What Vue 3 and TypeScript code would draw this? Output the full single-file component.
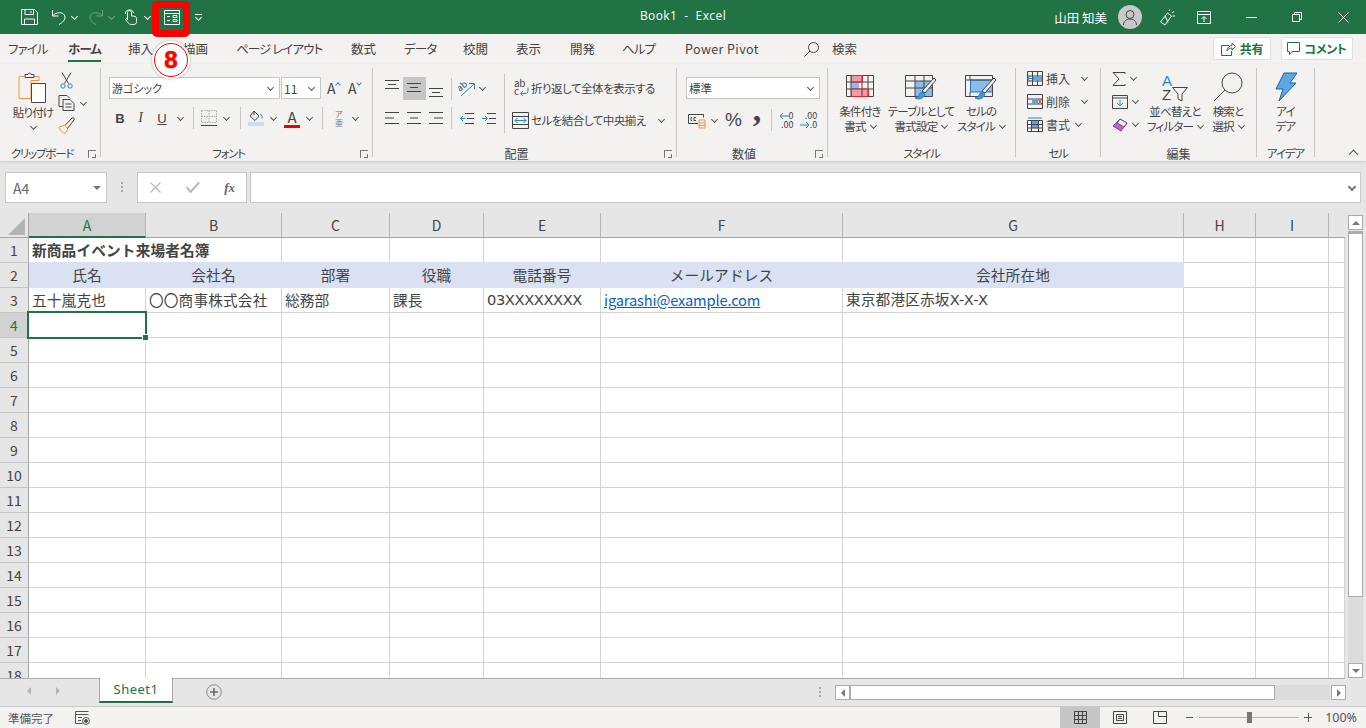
<template>
  <div class="app">
    <!-- title bar -->
    <header class="titlebar">
      <div class="qat">
        <svg class="q-save" width="17" height="16" viewBox="0 0 17 16"><path d="M.5.5h13l3 3v12H.5zM4 .5v5h8.500v-5M10 2v2M3.500 15.500V10h10v5.500" /></svg>
        <svg class="q-undo" width="15" height="16" viewBox="0 0 15 16"><path d="M1.500 1v6h6M1.500 7C4 3 13.500 2 14 8c.2 3-2.500 5.500-6 7.500" /></svg>
        <i class="chev w q-c1"></i>
        <svg class="q-redo" width="15" height="16" viewBox="0 0 15 16"><path d="M13.500 1v6h-6M13.500 7C11 3 1.500 2 1 8c-.2 3 2.500 5.500 6 7.500" /></svg>
        <i class="chev w dim q-c2"></i>
        <svg class="q-touch" width="13" height="16" viewBox="0 0 13 16"><path d="M3.500 10V3.500c0-2.500 4-2.500 4 0V7c3 0 5 .5 5 2.500v3c0 2-1 3-3 3h-2c-2 0-3-1-6-5 1-1.500 2-1 2 .5M1.500 5C.5.500 8.500-1 9.500 4" /></svg>
        <i class="chev w q-c3"></i>
        <svg class="q-form" width="16" height="15" viewBox="0 0 16 15"><path d="M.5.5h15v14H.5zM.5 3.500h15M3 6.500h3M3 10.500h3M9 5.500h4v2H9zM9 9.500h4v2H9z" /></svg>
        <span class="q-more"><b></b><i class="chev w"></i></span>
      </div>
      <div class="doc-title">Book1&nbsp; -&nbsp; Excel</div>
      <div class="winbar">
        <span class="user">山田 知美</span>
        <span class="avatar">
          <svg width="14" height="15" viewBox="0 0 14 15"><circle cx="7" cy="4.500" r="4" /><path d="M.5 15c0-8 13-8 13 0" /></svg>
        </span>
        <svg class="w-wand" width="16" height="17" viewBox="0 0 16 17"><path d="M.5 13l7-9 4 3-6.500 9zM5 6.500l3 7M9 2l1-1.500M12 4l2-1.500M12.500 7H15" /></svg>
        <svg class="w-disp" width="14" height="13" viewBox="0 0 14 13"><path d="M.5.500h13v12H.5zM.5 3.500h13M7 11V6M4.500 8L7 5.500 9.500 8" /></svg>
        <svg class="w-min" width="11" height="1" viewBox="0 0 11 1"><path d="M0 .5h11" /></svg>
        <svg class="w-max" width="10" height="10" viewBox="0 0 10 10"><path d="M.5 2.500h7v7h-7zM2.500 2.500v-2h7v7h-2" /></svg>
        <svg class="w-close" width="11" height="11" viewBox="0 0 11 11"><path d="M.5.5l10 10M10.500.5l-10 10" /></svg>
      </div>
    </header>

    <!-- ribbon tabs -->
    <nav class="tabs">
      <div class="tab-list">
        <div v-for="tab in tabs" :key="tab" class="tab" :class="tabClass(tab)">
          <span :class="{ active: tab === 'ホーム' }">{{ tab }}</span>
        </div>
        <div class="tab search-ic">
          <svg width="15" height="15" viewBox="0 0 15 15"><circle cx="9.500" cy="5.500" r="5" /><path d="M6 9l-5.500 5.500" /></svg>
        </div>
        <div class="tab"><span>検索</span></div>
      </div>
      <div class="share">
        <button class="pill">
          <svg width="15" height="14" viewBox="0 0 15 14"><path d="M8 3.500H.5v10h10V9M6 9c0-3.500 2.500-5.500 5-5.500V1l3.500 3.500L11 8V6C9 6 7 7 6 9z" /></svg>
          <b>共有</b>
        </button>
        <button class="pill wide">
          <svg width="13" height="13" viewBox="0 0 13 13"><path d="M.5.5h12v9H5l-2.500 3v-3h-2z" /></svg>
          <b>コメント</b>
        </button>
      </div>
    </nav>

    <!-- ribbon -->
    <section class="ribbon">
      <div class="group g-clip">
        <div class="body clip-body">
          <div class="big paste">
            <svg class="big-ic" width="28" height="31" viewBox="0 0 28 31">
              <path class="or" d="M6 4H1v22h12V8h8V4h-5" />
              <path class="dk" d="M7 5V2h3c0-2 3-2 3 0h3v3z" />
              <path class="dk wh" d="M13.500 11h14v19h-14z" />
            </svg>
            <span>貼り付け</span>
            <i class="chev below"></i>
          </div>
          <div class="small-col">
            <svg class="scissors" width="13" height="17" viewBox="0 0 13 17">
              <path class="dk" d="M2 .5l6.500 11M11 .5L4.500 11.500" />
              <circle class="bl" cx="3" cy="14" r="2.200" /><circle class="bl" cx="10" cy="14" r="2.200" />
            </svg>
            <div class="with-chev">
              <svg width="18" height="16" viewBox="0 0 18 16">
                <path class="dk" d="M1 .5h8l3 3M5 11.500H1V.5M5 4.500h7l4 4v7H5zM7.500 9h6M7.500 12h6" />
              </svg>
              <i class="chev"></i>
            </div>
            <svg width="17" height="17" viewBox="0 0 17 17">
              <path class="or" d="M1 10l6-2 3 4-3 4.500C5 16 2 14 1 10z" />
              <path class="dk" d="M7.500 8L14 1c1.500-1 3 .5 2 2l-6.500 8.500" />
            </svg>
          </div>
        </div>
        <div class="label kana"><span>クリップボード</span><i class="launcher"></i></div>
      </div>

      <div class="group g-font">
        <div class="body font-body">
          <div class="font-row">
            <div class="select font-name">游ゴシック<i class="chev"></i></div>
            <div class="select font-size">11<i class="chev"></i></div>
            <span class="grow">A<i class="chev up bluec"></i></span>
            <span class="grow">A<i class="chev bluec"></i></span>
          </div>
          <div class="font-tools">
            <b class="t-b">B</b>
            <em class="t-i">I</em>
            <u class="t-u">U</u>
            <i class="chev"></i>
            <i class="vsep"></i>
            <svg width="16" height="16" viewBox="0 0 16 16">
              <path class="grey dash" d="M.5.5h15v12H.5zM8 .5v12M.5 6.500h15" /><path class="dk" d="M0 15.500h16" />
            </svg>
            <i class="chev"></i>
            <i class="vsep"></i>
            <svg width="16" height="16" viewBox="0 0 16 16">
              <path class="dk" d="M6 1l5 5-4 4.500-5-4.500zM6 1v4" /><path class="bl" d="M12 4c2 1 2.500 3 2 4.500" />
              <rect x="0" y="12" width="16" height="4" fill="#cdd9ee" stroke="none" />
            </svg>
            <i class="chev"></i>
            <span class="t-a">A<b></b></span>
            <i class="chev"></i>
            <i class="vsep"></i>
            <span class="t-ph"><small>ア</small><small>亜</small></span>
            <i class="chev"></i>
          </div>
        </div>
        <div class="label kana"><span>フォント</span><i class="launcher"></i></div>
      </div>

      <div class="group g-align">
        <div class="body align-body">
          <div class="align-left">
            <div class="align-row first">
              <svg width="14" height="22" viewBox="0 0 14 22"><path class="dk" d="M0 2.500h14M3 6.500h8M0 10.500h14" /></svg>
              <span class="on"><svg width="14" height="22" viewBox="0 0 14 22"><path class="dk" d="M0 6.500h14M3 10.500h8M0 14.500h14" /></svg></span>
              <svg width="14" height="22" viewBox="0 0 14 22"><path class="dk" d="M0 10.500h14M3 14.500h8M0 18.500h14" /></svg>
              <i class="vsep"></i>
              <svg width="18" height="18" viewBox="0 0 18 18">
                <text x="0" y="9" class="tiny" transform="rotate(-40 5 8)">ab</text>
                <path class="bl" d="M3 16L16 4M11 3.500h5.500V9" />
              </svg>
              <i class="chev"></i>
            </div>
            <div class="align-row second">
              <svg width="14" height="14" viewBox="0 0 14 14"><path class="dk" d="M0 1.500h14M0 7h9M0 12.500h14" /></svg>
              <svg width="14" height="14" viewBox="0 0 14 14"><path class="dk" d="M0 1.500h14M3 7h8M0 12.500h14" /></svg>
              <svg width="14" height="14" viewBox="0 0 14 14"><path class="dk" d="M0 1.500h14M5 7h9M0 12.500h14" /></svg>
              <i class="vsep"></i>
              <svg width="14" height="13" viewBox="0 0 14 13"><path class="dk" d="M5 1.500h9M7 6.500h7M5 11.500h9" /><path class="bl" d="M5.500 6.500H.5M3 4L.5 6.500 3 9" /></svg>
              <svg width="14" height="13" viewBox="0 0 14 13"><path class="dk" d="M5 1.500h9M7 6.500h7M5 11.500h9" /><path class="bl" d="M0 6.500h5M3 4l2.500 2.500L3 9" /></svg>
            </div>
          </div>
          <i class="vsep long"></i>
          <div class="align-right">
            <div class="wide-row">
              <span class="wrap-ic"><small>ab</small><small>c</small>
                <svg width="9" height="10" viewBox="0 0 9 10"><path class="bl" d="M8 .5v3c0 2-1 3-3 3H1M3 4L.5 6.500 3 9" /></svg>
              </span>
              <span>折り返して全体を表示する</span>
            </div>
            <div class="wide-row">
              <svg width="17" height="17" viewBox="0 0 17 17">
                <path class="dk" d="M.5.500h16v16H.5zM.5 4.500h16M.5 12.500h16" /><path class="bl" d="M3 8.500h11M5.500 6L3 8.500 5.500 11M11.500 6L14 8.500 11.500 11" />
              </svg>
              <span>セルを結合して中央揃え</span>
              <i class="chev merge-chev"></i>
            </div>
          </div>
        </div>
        <div class="label"><span>配置</span><i class="launcher"></i></div>
      </div>

      <div class="group g-num">
        <div class="body num-body">
          <div class="select num-format">標準<i class="chev"></i></div>
          <div class="num-tools">
            <svg width="18" height="17" viewBox="0 0 18 17">
              <path class="dk" d="M10 11.500H.5v-9h15v3M4 5.500h-1v3h1M8 5.500H6v3h2" />
              <path class="or" d="M11 8h6v8h-6zM11 11h6M11 13.500h6" />
            </svg>
            <i class="chev"></i>
            <span class="t-pct">%</span>
            <span class="t-comma">,</span>
            <i class="vsep"></i>
            <span class="dec">
              <span class="dec-row"><svg width="10" height="8" viewBox="0 0 10 8"><path class="bl" d="M10 4H1M4 1L1 4l3 3" /></svg><small>0</small></span>
              <small>.00</small>
            </span>
            <span class="dec">
              <small>.00</small>
              <span class="dec-row"><svg width="10" height="8" viewBox="0 0 10 8"><path class="bl" d="M0 4h9M6 1l3 3-3 3" /></svg><small>.0</small></span>
            </span>
          </div>
        </div>
        <div class="label"><span>数値</span><i class="launcher"></i></div>
      </div>

      <div class="group g-style">
        <div class="body style-body">
          <div class="big">
            <svg class="big-ic" width="28" height="32" viewBox="0 0 28 32">
              <rect x="5" y="4" width="11" height="6" fill="#f39aa3" stroke="none" /><rect x="5" y="10" width="8" height="7" fill="#8abced" stroke="none" /><rect x="5" y="18" width="17" height="6" fill="#f39aa3" stroke="none" />
              <path class="dk" d="M.5 3.500h27v21H.5zM.5 10h27M.5 17h27M5 3.500v21M16 3.500v21M22 3.500v21" />
              <path class="rd" d="M5.500 3.500h11V10H5.500zM5.500 17h17v7.500h-17z" />
            </svg>
            <span>条件付き</span>
            <span>書式<i class="chev"></i></span>
          </div>
          <div class="big">
            <svg class="big-ic" width="32" height="32" viewBox="0 0 32 32">
              <rect x="10" y="9" width="18" height="15" fill="#8abced" stroke="none" />
              <path class="dk" d="M.5 3.500h27v21H.5zM.5 9h27M.5 16h27M10 3.500v21M19 3.500v21" />
              <path class="dk" d="M29 6l2 2-11 13-3-2z" fill="#f3f2f1" />
              <path class="bl thick" d="M17 20c-3 0-2 5-7 6 3 2 9 1 10-4z" fill="#4a93d1" />
            </svg>
            <span>テーブルとして</span>
            <span>書式設定<i class="chev"></i></span>
          </div>
          <div class="big">
            <svg class="big-ic" width="32" height="32" viewBox="0 0 32 32">
              <rect x="5.500" y="8" width="22" height="12" fill="#8abced" stroke="#1e78c2" />
              <path class="dk" d="M.5 3.500h27v21H.5zM5 3.500V8M27 8H.5M5 20v4.500" />
              <path class="dk" d="M29 6l2 2-11 13-3-2z" fill="#f3f2f1" />
              <path class="bl thick" d="M17 20c-3 0-2 5-7 6 3 2 9 1 10-4z" fill="#4a93d1" />
            </svg>
            <span>セルの</span>
            <span>スタイル<i class="chev"></i></span>
          </div>
        </div>
        <div class="label kana"><span>スタイル</span></div>
      </div>

      <div class="group g-cell">
        <div class="body cell-body">
          <div class="cell-row">
            <svg width="16" height="15" viewBox="0 0 16 15">
              <path class="dk" d="M.5.5h15v14H.5zM.5 5h15M.5 10h15M5.500.5v14M10.500.5v14" /><rect x="6" y="5.500" width="9" height="4" fill="#5ea8e2" stroke="none" /><path class="bl wh" d="M7 7.500H1M3 5L.8 7.500 3 10" />
            </svg>
            <span>挿入</span><i class="chev gap10"></i>
          </div>
          <div class="cell-row">
            <svg width="16" height="15" viewBox="0 0 16 15">
              <path class="dk" d="M.5.5h15v14H.5zM.5 5h15M.5 10h15" /><rect x="5" y="5" width="6" height="5" fill="#5ea8e2" stroke="none" /><path class="rd" d="M11 5l4 5M15 5l-4 5" />
            </svg>
            <span>削除</span><i class="chev gap10"></i>
          </div>
          <div class="cell-row">
            <svg width="16" height="15" viewBox="0 0 16 15">
              <rect x="4" y="4" width="8" height="7" fill="#5ea8e2" stroke="none" /><path class="dk" d="M.5 3.500h15v11H.5zM.5 7.500h15M.5 11h15M4.500 3.500v11M11.500 3.500v11" /><path class="bl" d="M1 1h14" />
            </svg>
            <span>書式</span><i class="chev"></i>
          </div>
        </div>
        <div class="label kana"><span>セル</span></div>
      </div>

      <div class="group g-edit">
        <div class="body edit-body">
          <div class="edit-col">
            <div class="edit-row">
              <svg width="14" height="14" viewBox="0 0 14 14"><path class="dk" d="M13 2V.5H1l6 6.500-6 6.500h12V12" /></svg>
              <i class="chev"></i>
            </div>
            <div class="edit-row">
              <svg width="16" height="14" viewBox="0 0 16 14"><path class="dk" d="M.5.500h15v13H.5zM.5 3h15" /><path class="bl" d="M8 5v6M5 8l3 3 3-3" /></svg>
              <i class="chev"></i>
            </div>
            <div class="edit-row">
              <svg width="16" height="14" viewBox="0 0 16 14"><path d="M8 1l7 4-6 8-8-5z" fill="#b968c7" stroke="#7e3794" /><path d="M8 1l7 4-3 4-7-4z" fill="#f3f2f1" stroke="#7e3794" /></svg>
              <i class="chev"></i>
            </div>
          </div>
          <div class="big">
            <div class="big-ic sort-ic">
              <span class="az"><em>A</em><em>Z</em></span>
              <svg width="16" height="15" viewBox="0 0 16 15"><path class="dk" d="M.5.5h15L10 7v7l-4-2V7z" /></svg>
            </div>
            <span>並べ替えと</span>
            <span>フィルター<i class="chev"></i></span>
          </div>
          <div class="big">
            <svg class="big-ic" width="30" height="32" viewBox="0 0 30 32">
              <circle class="dk" cx="19" cy="11" r="10" /><path class="dk" d="M12 18L1 29" />
            </svg>
            <span>検索と</span>
            <span>選択<i class="chev"></i></span>
          </div>
        </div>
        <div class="label"><span>編集</span></div>
      </div>

      <div class="group g-idea">
        <div class="body">
          <div class="big">
            <svg class="big-ic" width="22" height="32" viewBox="0 0 22 32">
              <path d="M9 1h13l-7 10h6L4 29l4-12H1z" fill="#5ea8e2" stroke="#1464a8" />
            </svg>
            <span>アイ</span>
            <span>デア</span>
          </div>
        </div>
        <div class="label kana"><span>アイデア</span></div>
      </div>

      <i class="chev up collapse"></i>
    </section>

    <!-- formula bar -->
    <section class="formula">
      <div class="namebox"><span>A4</span><i class="tri"></i></div>
      <div class="grip"><i></i><i></i><i></i></div>
      <div class="fx-box">
        <svg width="11" height="11" viewBox="0 0 11 11"><path d="M.5.5l10 10M10.500.5l-10 10" /></svg>
        <svg width="14" height="11" viewBox="0 0 14 11"><path class="check" d="M.5 5l4 5L13 .5" /></svg>
        <em>fx</em>
      </div>
      <div class="formula-input"><i class="chev thick-chev"></i></div>
    </section>

    <!-- sheet -->
    <section class="sheet">
      <div class="sheet-grid">
        <div class="corner"><i></i></div>
        <div v-for="col in columns" :key="col" class="col-head" :class="{ current: col === 'A' }">{{ col }}</div>
        <template v-for="row in rowNumbers" :key="row">
          <div class="row-head" :class="{ current: row === 4 }">{{ row }}</div>
          <div
            v-for="col in columns"
            :key="col"
            class="cell"
            :class="cellClass(col, row)"
          >
            <a v-if="col === 'F' && row === 3">{{ cells.F3 }}</a>
            <template v-else>{{ cells[col + row] }}</template>
            <div v-if="col === 'A' && row === 4" class="selection"><i></i></div>
          </div>
        </template>
      </div>
      <aside class="vscroll">
        <div class="sbtn"><i class="tri up"></i></div>
        <div class="vthumb"></div>
        <div class="vtrack"></div>
        <div class="sbtn"><i class="tri"></i></div>
      </aside>
    </section>

    <!-- sheet tabs -->
    <section class="sheetbar">
      <i class="tri left dim nav1"></i>
      <i class="tri right dim nav2"></i>
      <div class="sheet-tab">Sheet1</div>
      <svg class="add" width="16" height="16" viewBox="0 0 16 16"><circle cx="8" cy="8" r="7.300" /><path class="plus" d="M8 4v8M4 8h8" /></svg>
      <div class="grip bar-grip"><i></i><i></i><i></i></div>
      <div class="sbtn"><i class="tri left"></i></div>
      <div class="hthumb"></div>
      <div class="htrack"></div>
      <div class="sbtn last"><i class="tri right"></i></div>
    </section>

    <!-- status bar -->
    <footer class="status">
      <span class="ready">準備完了</span>
      <svg class="macro" width="15" height="14" viewBox="0 0 15 14"><path d="M.5.500h13M.5 3.500h13M.5.500v12h7M3 6.500h4M3 9.500h3" /><circle cx="11" cy="10" r="3.500" /><circle cx="11" cy="10" r="1.500" fill="#555" /></svg>
      <div class="views">
        <span class="view on">
          <svg width="13" height="13" viewBox="0 0 13 13"><path d="M.5.500h12v12H.5zM.5 4.500h12M.5 8.500h12M4.500.500v12M8.500.500v12" /></svg>
        </span>
        <span class="view">
          <svg width="14" height="13" viewBox="0 0 14 13"><path d="M.5.500h13v12H.5zM3.500 3.500h7v6h-7zM5 5.500h4M5 7.500h4" /></svg>
        </span>
        <span class="view">
          <svg width="14" height="13" viewBox="0 0 14 13"><path d="M.5.500h13v12H.5zM5.500.500v5h8" /></svg>
        </span>
      </div>
      <div class="zoom">
        <i class="z-minus"></i>
        <div class="slider"><i></i></div>
        <i class="z-plus"></i>
        <span>100%</span>
      </div>
    </footer>

    <!-- tutorial markers on top of the screenshot -->
    <div class="mark-box"></div>
    <div class="mark-num"><span>8</span></div>
  </div>
</template>

<script setup lang="ts">
const tabs: string[] = [
  'ファイル',
  'ホーム',
  '挿入',
  '描画',
  'ページ レイアウト',
  '数式',
  'データ',
  '校閲',
  '表示',
  '開発',
  'ヘルプ',
  'Power Pivot',
]

const columns: string[] = ['A', 'B', 'C', 'D', 'E', 'F', 'G', 'H', 'I', '']
const rowNumbers: number[] = Array.from({ length: 18 }, (_, i) => i + 1)
const filled = 'ABCDEFG'

const cells: Record<string, string> = {
  A1: '新商品イベント来場者名簿',
  A2: '氏名',
  B2: '会社名',
  C2: '部署',
  D2: '役職',
  E2: '電話番号',
  F2: 'メールアドレス',
  G2: '会社所在地',
  A3: '五十嵐克也',
  B3: '〇〇商事株式会社',
  C3: '総務部',
  D3: '課長',
  E3: '03XXXXXXXX',
  F3: 'igarashi@example.com',
  G3: '東京都港区赤坂X-X-X',
}

const tabClass = (tab: string) => ({
  kana: /[ァ-ヶ]/.test(tab),
  latin: tab === 'Power Pivot',
})

const cellClass = (col: string, row: number) => {
  const inFill = col !== '' && filled.includes(col)
  return {
    title: col === 'A' && row === 1,
    fill: row === 2 && inFill,
    aboveFill: row === 1 && inFill,
    wideLatin: row === 3 && (col === 'E' || col === 'G'),
    phone: row === 3 && col === 'E',
  }
}
</script>

<style>
html,
body {
  margin: 0;
  overflow: hidden;
}
</style>

<style scoped>
.app {
  position: relative;
  display: flex;
  flex-direction: column;
  width: 1366px;
  height: 728px;
  overflow: hidden;
  background: #e6e6e6;
  color: #444;
  font-family: "Noto Sans CJK JP", "Noto Sans", sans-serif;
  font-size: 12px;
  font-feature-settings: "palt";
}
svg {
  display: block;
  fill: none;
  stroke: #444;
  flex: none;
}
i {
  display: block;
  font-style: normal;
}
.chev {
  width: 4px;
  height: 4px;
  border: solid #555;
  border-width: 0 1px 1px 0;
  transform: translateY(-1px) rotate(45deg);
  flex: none;
}
.chev.up {
  transform: translateY(1px) rotate(225deg);
}
.chev.w {
  border-color: #fff;
}
.chev.dim {
  opacity: 0.35;
}
.dk {
  stroke: #444;
}
.wh {
  fill: #fff;
}
.bl {
  stroke: #1e8bcd;
}
.or {
  stroke: #ed9a3c;
}
.rd {
  stroke: #e3262e;
}
.grey {
  stroke: #aaa;
}
.dash {
  stroke-dasharray: 1.500 1;
}
.thick {
  stroke-width: 1;
}
.vsep {
  width: 1px;
  height: 22px;
  background: #c8c6c4;
}

/* title bar */
.titlebar {
  display: grid;
  grid-template-columns: 1fr auto 1fr;
  align-items: center;
  height: 34px;
  background: #217346;
  color: #fff;
}
.titlebar svg {
  stroke: #fff;
}
.qat {
  display: flex;
  align-items: center;
}
.q-save {
  margin-left: 21px;
}
.q-undo {
  margin-left: 13px;
}
.q-c1 {
  margin-left: 6px;
}
.q-redo {
  margin-left: 12px;
  opacity: 0.35;
}
.q-c2 {
  margin-left: 5px;
}
.q-touch {
  margin-left: 10px;
}
.q-c3 {
  margin-left: 8px;
}
.q-form {
  margin-left: 14px;
}
.q-more {
  margin-left: 15px;
  width: 7px;
}
.q-more b {
  display: block;
  height: 1px;
  margin-bottom: 1px;
  background: #fff;
}
.q-more .chev {
  margin-left: 1px;
}
.doc-title {
  margin-top: -3px;
  font-size: 12px;
  letter-spacing: 0.4px;
  font-family: "Open Sans", sans-serif;
}
.winbar {
  display: flex;
  align-items: center;
  justify-content: flex-end;
  padding-right: 17px;
}
.user {
  font-size: 12.500px;
}
.avatar {
  display: flex;
  align-items: center;
  justify-content: center;
  width: 24px;
  height: 24px;
  margin-left: 11px;
  border-radius: 50%;
  background: #c8c8c8;
}
.titlebar .avatar svg {
  stroke: #444;
}
.w-wand {
  margin-left: 18px;
}
.w-disp {
  margin-left: 21px;
}
.w-min {
  margin-left: 35px;
}
.w-max {
  margin-left: 35px;
}
.w-close {
  margin-left: 36px;
}

/* tabs */
.tabs {
  display: flex;
  height: 30px;
  background: #f3f2f1;
}
.tab-list {
  display: grid;
  grid-template-columns: 60px 60px 55px 53px 115px 53px 59px 53px 54px 52px 63px 119px 28px 60px;
}
.tab {
  padding: 6px 0 0 8px;
  line-height: 18px;
  font-size: 12.500px;
  white-space: nowrap;
}
.tab.kana {
  letter-spacing: -0.9px;
}
.tab.latin {
  letter-spacing: 0.4px;
}
.tab span {
  display: inline-block;
  padding-bottom: 2px;
  border-bottom: 2px solid transparent;
}
.tab span.active {
  border-bottom-color: #217346;
  font-weight: 700;
}
.search-ic {
  padding-top: 8px;
}
.share {
  display: flex;
  gap: 10px;
  margin-left: auto;
  padding: 3px 13px 0 0;
}
.pill {
  display: flex;
  align-items: center;
  justify-content: center;
  gap: 4px;
  width: 58px;
  height: 23px;
  padding: 0;
  border: 1px solid #e1dfdd;
  border-radius: 2px;
  background: #fff;
  color: #217346;
  font: inherit;
  letter-spacing: -0.3px;
}
.pill.wide {
  width: 72px;
}
.pill svg {
  stroke: #217346;
}

/* ribbon */
.ribbon {
  position: relative;
  display: flex;
  align-items: flex-start;
  height: 97px;
  padding-top: 4px;
  box-sizing: border-box;
  background: #f3f2f1;
  box-shadow: 0 1px 2px #c8c8c8;
  z-index: 1;
}
.group {
  display: flex;
  flex-direction: column;
  height: 89px;
  box-sizing: border-box;
  border-right: 1px solid #c8c6c4;
}
.g-clip {
  width: 101px;
}
.g-font {
  width: 272px;
}
.g-align {
  width: 304px;
}
.g-num {
  width: 151px;
}
.g-style {
  width: 188px;
}
.g-cell {
  width: 85px;
}
.g-edit {
  width: 156px;
}
.g-idea {
  width: 58px;
}
.body {
  flex: 1;
  min-height: 0;
  display: flex;
}
.label {
  display: flex;
  align-items: center;
  height: 14px;
  margin-bottom: -3px;
}
.label span {
  flex: 1;
  text-align: center;
  white-space: nowrap;
}
.label.kana span {
  font-size: 11.500px;
  letter-spacing: -1.200px;
}
.launcher {
  width: 7px;
  height: 7px;
  margin: 1px 4px 0 4px;
  border: solid #777;
  border-width: 1px 0 0 1px;
  position: relative;
}
.launcher::after {
  content: "";
  position: absolute;
  right: 0;
  bottom: 0;
  width: 3px;
  height: 3px;
  border: solid #777;
  border-width: 0 1px 1px 0;
}
.big {
  display: flex;
  flex-direction: column;
  align-items: center;
  padding-top: 4px;
  font-size: 11.500px;
  letter-spacing: -0.800px;
  line-height: 15px;
  white-space: nowrap;
}
.big-ic {
  height: 32px;
}
.big .chev {
  display: inline-block;
  margin-left: 5px;
  vertical-align: 2px;
}

/* clipboard */
.paste {
  width: 60px;
  margin-left: 3px;
}
.paste .big-ic {
  margin-left: -2px;
  margin-bottom: 1px;
}
.big .chev.below {
  margin: 5px 0 0;
}
.small-col {
  display: flex;
  flex-direction: column;
  justify-content: space-between;
  align-items: flex-start;
  height: 62px;
  padding-top: 4px;
  margin-left: -5px;
}
.scissors {
  margin-left: 2px;
}
.with-chev {
  display: flex;
  align-items: center;
  gap: 5px;
}

/* font */
.font-body {
  flex-direction: column;
  padding: 9px 0 0 8px;
}
.font-row {
  display: flex;
  align-items: center;
}
.select {
  display: flex;
  align-items: center;
  justify-content: space-between;
  height: 22px;
  box-sizing: border-box;
  padding: 0 6px 0 2px;
  border: 1px solid #c8c6c4;
  background: #fff;
  font-size: 11px;
  white-space: nowrap;
}
.font-name {
  width: 171px;
}
.font-size {
  width: 40px;
  margin-left: 1px;
  font-size: 12px;
}
.grow {
  display: flex;
  width: 21px;
  font-size: 14px;
  line-height: 20px;
  padding-left: 6px;
  box-sizing: border-box;
}
.bluec {
  width: 3px;
  height: 3px;
  border-color: #1e8bcd;
}
.grow .chev {
  margin-top: 4px;
}
.font-tools {
  display: grid;
  grid-template-columns: 20px 21px 22px 14px 12px 19px 16px 12px 20px 14px 24px 10px 16px 18px 14px;
  place-items: center;
  height: 22px;
  margin-top: 8px;
  margin-left: 1px;
  font-size: 13px;
}
.font-tools em {
  font-family: "Liberation Serif", serif;
  font-size: 14px;
}
.t-b,
.t-u {
  font-family: "Liberation Sans", sans-serif;
}
.t-a {
  display: flex;
  flex-direction: column;
  align-items: center;
  font-size: 15px;
  line-height: 16px;
}
.t-a b {
  width: 16px;
  height: 3px;
  background: #e00;
}
.t-ph {
  display: flex;
  flex-direction: column;
  line-height: 9px;
  opacity: 0.7;
}
.t-ph small {
  font-size: 8px;
}

/* alignment */
.align-left {
  width: 131px;
  padding: 9px 0 0 8px;
  box-sizing: border-box;
}
.align-row {
  display: grid;
  place-items: center;
  height: 22px;
}
.align-row.first {
  grid-template-columns: 22px 22px 22px 8px 23px 8px;
}
.align-row.second {
  grid-template-columns: 22px 22px 22px 8px 23px 22px;
  margin-top: 8px;
}
.align-row .on {
  display: flex;
  justify-content: center;
  width: 23px;
  height: 23px;
  background: #c6c6c6;
}
.tiny {
  font-size: 9px;
  fill: #444;
  stroke: none;
}
.vsep.long {
  height: 59px;
  margin-top: 6px;
}
.align-right {
  padding: 9px 0 0 7px;
}
.wide-row {
  display: flex;
  align-items: center;
  gap: 2px;
  height: 22px;
  font-size: 11.500px;
  letter-spacing: -0.500px;
  white-space: nowrap;
}
.wide-row + .wide-row {
  margin-top: 10px;
}
.wrap-ic {
  position: relative;
  width: 17px;
  height: 18px;
  margin-right: 0;
  line-height: 8px;
  font-size: 9px;
  padding-left: 2px;
  box-sizing: border-box;
}
.wrap-ic small {
  display: block;
  font-size: 10px;
}
.wrap-ic svg {
  position: absolute;
  right: 0;
  bottom: 0;
}
.merge-chev {
  margin-left: 11px;
}

/* number */
.num-body {
  flex-direction: column;
  padding: 9px 0 0 9px;
}
.num-format {
  width: 134px;
  font-size: 11.500px;
}
.num-tools {
  display: grid;
  grid-template-columns: 22px 12px 27px 20px 8px 22px 23px;
  place-items: center;
  height: 22px;
  margin-top: 10px;
}
.t-pct {
  font-size: 19px;
  font-family: "Liberation Sans", sans-serif;
  line-height: 22px;
}
.t-comma {
  font-family: "Liberation Serif", serif;
  font-size: 34px;
  font-weight: 700;
  line-height: 22px;
  transform: translateY(-10px);
}
.dec {
  display: flex;
  flex-direction: column;
  align-items: flex-end;
  line-height: 9px;
}
.dec small {
  font-size: 9px;
}
.dec-row {
  display: flex;
  align-items: center;
}

/* styles */
.style-body {
  display: grid;
  grid-template-columns: 64px 58px 62px;
}

/* cells */
.cell-body {
  flex-direction: column;
  margin-top: -1px;
  padding-left: 11px;
}
.cell-row {
  display: flex;
  align-items: center;
  gap: 3px;
  height: 23px;
}
.gap10 {
  margin-left: 9px;
}
.cell-row .chev:not(.gap10) {
  margin-left: 3px;
}

/* editing */
.edit-body {
  display: grid;
  grid-template-columns: 45px 58px 48px;
}
.edit-col {
  margin-top: -1px;
  padding-left: 11px;
}
.edit-row {
  display: flex;
  align-items: center;
  gap: 5px;
  height: 23px;
}
.sort-ic {
  display: flex;
  align-items: flex-end;
  gap: 1px;
  padding-bottom: 2px;
  box-sizing: border-box;
}
.az {
  display: flex;
  flex-direction: column;
  font-family: "Liberation Sans", sans-serif;
  font-size: 15px;
  line-height: 14px;
}
.az em {
  font-style: normal;
}
.az em:first-child {
  color: #1e8bcd;
}
.g-idea .body {
  justify-content: center;
}
.collapse {
  position: absolute;
  right: 9px;
  bottom: 4px;
  width: 6px;
  height: 6px;
}

/* formula bar */
.formula {
  display: flex;
  align-items: flex-start;
  height: 52px;
  padding: 11px 5px 0;
  box-sizing: border-box;
  background: #e6e6e6;
}
.namebox,
.fx-box,
.formula-input {
  display: flex;
  align-items: center;
  height: 31px;
  box-sizing: border-box;
  border: 1px solid #c6c6c6;
  background: #fff;
}
.namebox {
  justify-content: space-between;
  width: 102px;
  padding: 0 5px 0 7px;
  font-size: 14px;
  color: #666;
}
.tri {
  width: 0;
  height: 0;
  border-style: solid;
  border-width: 4px 4px 0;
  border-color: #777 transparent transparent;
}
.tri.up {
  border-width: 0 4px 4px;
  border-color: transparent transparent #777;
}
.tri.left {
  border-width: 4px 4px 4px 0;
  border-color: transparent #777 transparent transparent;
}
.tri.right {
  border-width: 4px 0 4px 4px;
  border-color: transparent transparent transparent #777;
}
.grip {
  display: flex;
  flex-direction: column;
  gap: 2px;
  width: 2px;
  margin: 10px 14px 0 14px;
}
.grip i {
  width: 2px;
  height: 2px;
  background: #a8a8a8;
}
.fx-box {
  justify-content: space-between;
  width: 110px;
  padding: 0 11px 0 12px;
}
.fx-box svg {
  stroke: #b9b9b9;
  stroke-width: 1.200;
}
.fx-box .check {
  stroke-width: 2;
}
.fx-box em {
  font-family: "Liberation Serif", serif;
  font-weight: 700;
  font-size: 13px;
  color: #666;
}
.formula-input {
  flex: 1;
  justify-content: flex-end;
  margin-left: 3px;
  padding-right: 5px;
}
.thick-chev {
  width: 4px;
  height: 4px;
  border-width: 0 2px 2px 0;
  border-color: #777;
}

/* sheet */
.sheet {
  display: flex;
  height: 466px;
  box-sizing: border-box;
  background: #e6e6e6;
}
.sheet-grid {
  display: grid;
  grid-template-columns: 29px 117px 136px 108px 94px 117px 242px 341px 72px 73px 16px;
  grid-auto-rows: 25px;
  width: 1345px;
  height: 466px;
  box-sizing: border-box;
  overflow: hidden;
  background: #fff;
  border-bottom: 1px solid #ababab;
  font-size: 14.670px;
  font-feature-settings: normal;
  color: #444;
}
.corner {
  display: flex;
  align-items: flex-end;
  justify-content: flex-end;
  padding: 0 3px 2px 0;
  box-sizing: border-box;
  background: #e6e6e6;
  border-right: 1px solid #a5a5a5;
  border-bottom: 1px solid #a5a5a5;
}
.corner i {
  width: 0;
  height: 0;
  border-style: solid;
  border-width: 0 0 17px 17px;
  border-color: transparent transparent #b4b4b4;
}
.col-head {
  display: flex;
  align-items: center;
  justify-content: center;
  box-sizing: border-box;
  background: #e6e6e6;
  border-right: 1px solid #b5b5b5;
  border-bottom: 1px solid #a5a5a5;
  font-size: 14px;
  line-height: 1;
}
.col-head.current {
  background: #d2d2d2;
  border-bottom: 2px solid #217346;
  color: #217346;
}
.col-head:nth-of-type(11) {
  border-right: 0;
}
.row-head {
  display: flex;
  align-items: center;
  justify-content: center;
  box-sizing: border-box;
  background: #e6e6e6;
  border-right: 1px solid #a5a5a5;
  border-bottom: 1px solid #c6c6c6;
  font-size: 14px;
  line-height: 1;
}
.row-head.current {
  background: #d2d2d2;
  color: #217346;
}
.cell {
  position: relative;
  box-sizing: border-box;
  padding-left: 3px;
  border-right: 1px solid #d4d4d4;
  border-bottom: 1px solid #d4d4d4;
  line-height: 24px;
  letter-spacing: 0.150px;
  white-space: nowrap;
}
.cell.title {
  border-right-color: transparent;
  font-weight: 700;
}
.cell.fill {
  padding-left: 0;
  background: #d9e1f2;
  border-color: #d9e1f2;
  text-align: center;
}
.cell.aboveFill {
  border-bottom-color: #d9e1f2;
}
.cell.wideLatin {
  font-family: "DejaVu Sans", "Noto Sans CJK JP", sans-serif;
}
.cell.phone {
  letter-spacing: -0.400px;
}
.cell a {
  color: #0563c1;
  letter-spacing: -0.150px;
  text-decoration: underline;
}
.selection {
  position: absolute;
  left: -2px;
  top: -2px;
  width: 120px;
  height: 28px;
  box-sizing: border-box;
  border: 2px solid #217346;
  z-index: 2;
}
.selection i {
  position: absolute;
  right: -3px;
  bottom: -3px;
  width: 5px;
  height: 5px;
  background: #217346;
  outline: 1px solid #fff;
}
.vscroll {
  display: flex;
  flex-direction: column;
  width: 21px;
  height: 465px;
  padding: 2px 3px 0 3px;
  box-sizing: border-box;
}
.sbtn {
  display: flex;
  align-items: center;
  justify-content: center;
  width: 15px;
  height: 15px;
  box-sizing: border-box;
  border: 1px solid #ababab;
  background: #fff;
  flex: none;
}
.vthumb {
  height: 366px;
  margin-top: 1px;
  box-sizing: border-box;
  border: solid #ababab;
  border-width: 3px 1px 1px;
  background: #fff;
}
.vtrack {
  flex: 1;
  background: #dcdcdc;
}

/* sheet tabs */
.sheetbar {
  display: flex;
  align-items: flex-start;
  height: 28px;
  box-sizing: border-box;
  background: #e6e6e6;
  border-bottom: 1px solid #c8c8c8;
}
.sheetbar .dim {
  opacity: 0.45;
}
.nav1 {
  margin: 8px 0 0 27px;
}
.nav2 {
  margin: 8px 0 0 25px;
}
.sheet-tab {
  position: relative;
  width: 74px;
  height: 25px;
  margin: -1px 0 0 39px;
  box-sizing: border-box;
  border: solid #a5a5a5;
  border-width: 0 1px;
  border-bottom: 2px solid #217346;
  background: #fff;
  color: #217346;
  font-family: "Noto Sans", sans-serif;
  font-size: 13px;
  line-height: 23px;
  letter-spacing: 0.500px;
  text-align: center;
}
.add {
  margin: 5px 0 0 33px;
  stroke: #8a8a8a;
}
.add .plus {
  stroke: #666;
  stroke-width: 1.500;
}
.bar-grip {
  margin: 8px 14px 0 597px;
}
.sheetbar .sbtn {
  margin-top: 6px;
}
.hthumb {
  width: 425px;
  height: 15px;
  margin-top: 6px;
  box-sizing: border-box;
  border: 1px solid #ababab;
  background: #fff;
}
.htrack {
  width: 55px;
  height: 15px;
  margin-top: 6px;
  background: #dcdcdc;
}
.sbtn.last {
  margin-left: 1px;
}

/* status bar */
.status {
  display: flex;
  align-items: center;
  height: 21px;
  background: #f3f2f1;
  font-size: 11.500px;
  color: #555;
}
.ready {
  margin-left: 8px;
}
.macro {
  margin-left: 21px;
  stroke: #555;
}
.views {
  display: flex;
  margin-left: auto;
}
.view {
  display: flex;
  align-items: center;
  justify-content: center;
  width: 40px;
  height: 21px;
}
.view.on {
  background: #c6c6c6;
}
.zoom {
  display: flex;
  align-items: center;
  margin-right: 9px;
  font-size: 12.500px;
  font-family: "Noto Sans", sans-serif;
}
.z-minus {
  width: 7px;
  height: 1px;
  margin-left: 6px;
  background: #555;
}
.slider {
  position: relative;
  width: 100px;
  height: 1px;
  margin-left: 6px;
  background: #b5b5b5;
}
.slider i {
  position: absolute;
  left: 48px;
  top: -5px;
  width: 5px;
  height: 11px;
  background: #777;
}
.z-plus {
  position: relative;
  width: 8px;
  height: 1px;
  margin: 0 13px 0 5px;
  background: #555;
}
.z-plus::after {
  content: "";
  position: absolute;
  left: 4px;
  top: -4px;
  width: 1px;
  height: 9px;
  background: #555;
}

/* markers */
.mark-box {
  position: absolute;
  left: 152px;
  top: 1px;
  width: 38px;
  height: 36px;
  box-sizing: border-box;
  border: 7px solid #f00;
  border-radius: 5px;
  z-index: 3;
}
.mark-num {
  position: absolute;
  left: 152px;
  top: 41px;
  display: flex;
  align-items: center;
  justify-content: center;
  width: 38px;
  height: 38px;
  border-radius: 50%;
  background: #fff;
  box-shadow: 0 0 3px rgba(0, 0, 0, 0.25);
  z-index: 3;
}
.mark-num::before {
  content: "";
  position: absolute;
  inset: 2px;
  border: 1px solid #f00;
  border-radius: 50%;
}
.mark-num span {
  color: #f00;
  font-family: "Liberation Sans", sans-serif;
  font-size: 24px;
  font-weight: 700;
  -webkit-text-stroke: 0.6px #f00;
}
</style>
